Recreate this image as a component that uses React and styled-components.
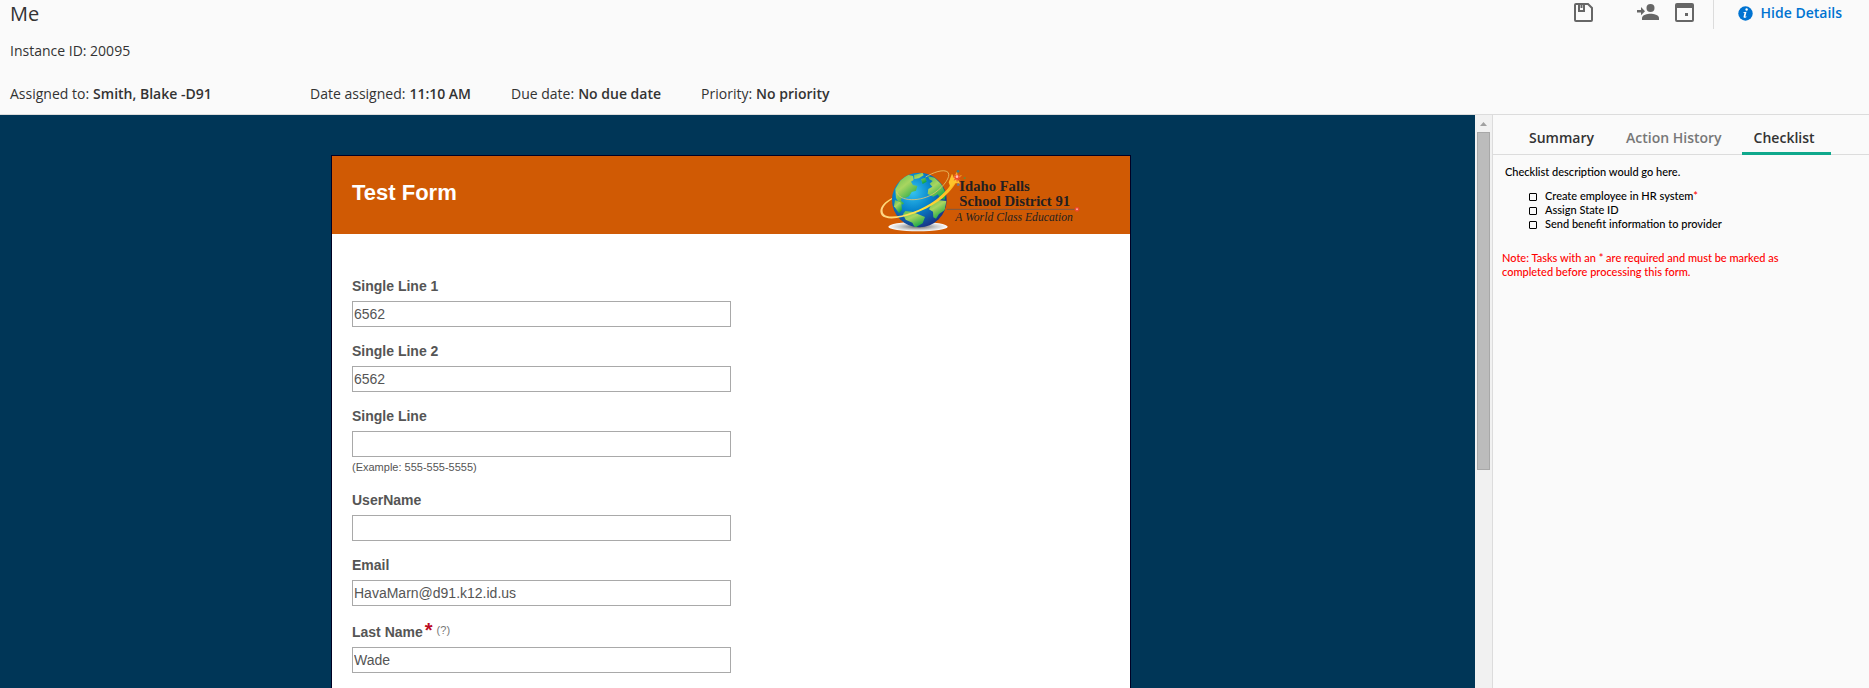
import React from "react";
import styled, { createGlobalStyle } from "styled-components";

const GlobalStyle = createGlobalStyle`
  *, *::before, *::after { box-sizing: border-box; }
  body { margin: 0; background: #fafafa; }
`;

const uiFont = `"Open Sans", "Noto Sans", sans-serif`;
const formFont = `"Liberation Sans", Arial, sans-serif`;

const Page = styled.div`
  display: flex;
  flex-direction: column;
  height: 100vh;
  overflow: hidden;
  font-family: ${uiFont};
  font-size: 14px;
  line-height: 20px;
  color: #333;
`;

const Header = styled.header`
  display: flex;
  justify-content: space-between;
  align-items: flex-start;
  flex: none;
  border-bottom: 1px solid #dcdcdc;
`;

const HeaderInfo = styled.div`
  padding: 0 10px 10px;
`;

const Title = styled.h1`
  margin: 0;
  font-size: 20px;
  line-height: 28px;
  font-weight: 400;
`;

const InstanceId = styled.p`
  margin: 13px 0 23px;
`;

const Facts = styled.dl`
  display: flex;
  gap: 40px;
  margin: 0;
`;

const Fact = styled.div`
  display: flex;
  gap: 4px;
  min-width: ${(p) => (p.$wide ? "260px" : "0")};
  white-space: nowrap;

  dd {
    margin: 0;
    font-weight: 600;
  }
`;

const Actions = styled.div`
  display: flex;
  align-items: center;
  height: 29px;
  padding-right: 27px;
`;

const IconButton = styled.button`
  display: flex;
  padding: 0;
  margin: 0 ${(p) => p.$gap}px 4px 0;
  border: 0;
  background: none;
  color: #666;
  cursor: pointer;
`;

const DetailsButton = styled.button`
  display: flex;
  align-items: flex-start;
  gap: 8px;
  height: 29px;
  padding: 3px 0 0 24px;
  border: 0;
  border-left: 1px solid #dcdcdc;
  background: none;
  font: 600 14px/20px ${uiFont};
  color: #0073d1;
  cursor: pointer;

  svg { margin-top: 3px; }
`;

const Body = styled.div`
  display: flex;
  flex: 1;
  min-height: 0;
`;

const FormPane = styled.main`
  flex: 1;
  min-width: 0;
  overflow-y: auto;
  scrollbar-width: none;
  padding: 40px 13px 0 0;
  background: #003657;
`;

const FormCard = styled.form`
  width: 800px;
  max-width: 100%;
  margin: 0 auto;
  border: 1px solid #000024;
  background: #fff;
  font-family: ${formFont};
  color: #555;
`;

const FormHeader = styled.div`
  display: flex;
  justify-content: space-between;
  height: 78px;
  padding: 12px 49px 0 20px;
  background: #d05a04;
`;

const FormTitle = styled.h2`
  margin: 12px 0 0;
  font-size: 22px;
  line-height: 26px;
  color: #fff;
`;

const Fields = styled.div`
  display: flex;
  flex-direction: column;
  gap: 15px;
  padding: 43px 20px 40px;
`;

const FieldBox = styled.div`
  display: flex;
  flex-direction: column;
  align-items: flex-start;
`;

const LabelRow = styled.div`
  display: flex;
  align-items: flex-end;
  height: ${(p) => (p.$required ? 26 : 24)}px;
  padding-bottom: 6px;
  font-size: 14px;
  line-height: 18px;

  label { font-weight: 700; }
`;

const Star = styled.span`
  margin: 0 4px 0 2px;
  align-self: flex-start;
  font-size: 20px;
  line-height: 18px;
  font-weight: 700;
  color: #bc0b23;
`;

const HelpButton = styled.button`
  align-self: flex-start;
  padding: 0;
  border: 0;
  background: none;
  font: 11px/18px ${formFont};
  color: #777;
`;

const TextBox = styled.input`
  width: 379px;
  max-width: 100%;
  height: 26px;
  padding: 0 1px;
  border: 1px solid #a9a9a9;
  border-radius: 0;
  background: #fff;
  font: 14px ${formFont};
  color: #555;
`;

const Hint = styled.small`
  height: 19px;
  padding-top: 3px;
  font-size: 11px;
  line-height: 14px;
`;

const ScrollBar = styled.div`
  display: flex;
  flex-direction: column;
  flex: none;
  width: 17px;
  background: #f1f1f1;
`;

const ScrollUp = styled.button`
  display: flex;
  align-items: center;
  justify-content: center;
  flex: none;
  height: 17px;
  padding: 0;
  border: 0;
  background: none;
`;

const ScrollThumb = styled.div`
  flex: 0 0 59%;
  margin: 0 2px;
  border: 1px solid #a8a8a8;
  background: #bcbcbc;
`;

const SidePanel = styled.aside`
  flex: none;
  width: 377px;
  border-left: 1px solid #dcdcdc;
  background: #fafafa;
`;

const Tabs = styled.div`
  display: flex;
  gap: 8px;
  height: 40px;
  padding: 8px 0 0 24px;
  border-bottom: 1px solid #dcdcdc;
`;

const Tab = styled.button`
  height: 32px;
  min-width: 89px;
  padding: 0 12px;
  border: 0;
  border-bottom: 3px solid ${(p) => (p.$active ? "#0fa88c" : "transparent")};
  background: none;
  font: 600 14px/20px ${uiFont};
  text-align: left;
  color: ${(p) => (p.$dim ? "#777" : "#333")};
  cursor: pointer;
`;

const Checklist = styled.section`
  padding: 10px 12px 0 9px;
  font-family: Lato, "Open Sans", sans-serif;
  font-size: 11px;
  line-height: 14px;
  font-weight: 500;
  color: #000;
`;

const Description = styled.p`
  margin: 0 0 10px 3px;
`;

const Tasks = styled.ul`
  margin: 0;
  padding: 0 0 0 27px;
  list-style: none;
`;

const Task = styled.li`
  display: flex;
  align-items: center;
  gap: 8px;
`;

const Tick = styled.input`
  appearance: none;
  width: 8px;
  height: 8px;
  margin: 2px 0 0;
  border: 1px solid #000;
  border-radius: 1px;

  &:checked { background: #000; }
`;

const Required = styled.span`
  color: #f00;
`;

const Note = styled.p`
  max-width: 300px;
  margin: 20px 0 0;
  color: #f00;
`;

const SaveIcon = () => (
  <svg width="20" height="20" viewBox="0 0 20 20" fill="none" stroke="currentColor" strokeWidth="2" aria-hidden="true">
    <path d="M2 1h12l4 4v12a1 1 0 0 1-1 1H2a1 1 0 0 1-1-1V2a1 1 0 0 1 1-1z" />
    <path d="M5 1v7h5V1M7.500 1v4" />
  </svg>
);

const AssignIcon = () => (
  <svg width="22" height="20" viewBox="0 0 22 20" fill="currentColor" aria-hidden="true">
    <circle cx="13.500" cy="5" r="4" />
    <path d="M5 17v-2c0-3 5.500-4.200 8.500-4.200S22 12 22 15v2z" />
    <path d="M0 7h4V4l4 4.300-4 4V9.500H0z" />
  </svg>
);

const CalendarIcon = () => (
  <svg width="20" height="20" viewBox="0 0 20 20" fill="currentColor" aria-hidden="true">
    <path fillRule="evenodd" d="M2 0h15a2 2 0 0 1 2 2v15a2 2 0 0 1-2 2H2a2 2 0 0 1-2-2V2a2 2 0 0 1 2-2zM2 5v12h15V5z" />
    <path d="M10 10h3v3h-3z" />
  </svg>
);

const InfoIcon = () => (
  <svg width="15" height="15" viewBox="0 0 15 15" aria-hidden="true">
    <circle cx="7.500" cy="7.500" r="7.200" fill="#0073d1" />
    <circle cx="8.600" cy="3.500" r="1.200" fill="#fff" />
    <path d="M5.500 6.200l3-.5-1.200 5 1.200-.4-.2.900c-1.600 1-3 .9-2.700-.6l.9-3.600-1.100-.1z" fill="#fff" />
  </svg>
);

const UpArrow = () => (
  <svg width="7" height="4" viewBox="0 0 7 4" aria-hidden="true">
    <path d="M3.500 0L7 4H0z" fill="#a0a0a0" />
  </svg>
);

const DistrictLogo = () => (
  <svg width="202" height="65" viewBox="55 55 606 195" role="img" aria-label="Idaho Falls School District 91">
    <defs>
      <radialGradient id="ocean" cx=".38" cy=".35" r=".75">
        <stop offset="0" stopColor="#35c4ee" />
        <stop offset=".45" stopColor="#0784cc" />
        <stop offset="1" stopColor="#1b2478" />
      </radialGradient>
      <linearGradient id="land" x1="0" y1="0" x2=".6" y2="1">
        <stop offset="0" stopColor="#5bbd50" />
        <stop offset=".45" stopColor="#a9d560" />
        <stop offset="1" stopColor="#16a747" />
      </linearGradient>
      <linearGradient id="comet" x1="60" y1="200" x2="290" y2="80" gradientUnits="userSpaceOnUse">
        <stop offset="0" stopColor="#ffd58a" />
        <stop offset=".45" stopColor="#ffe23e" />
        <stop offset="1" stopColor="#ffab18" />
      </linearGradient>
      <radialGradient id="base">
        <stop offset="0" stopColor="#666" />
        <stop offset=".6" stopColor="#c9c9c9" />
        <stop offset="1" stopColor="#fff" />
      </radialGradient>
      <clipPath id="sphere"><circle cx="176" cy="151" r="82" /></clipPath>
    </defs>
    <ellipse cx="172" cy="231" rx="89" ry="14" fill="url(#base)" />
    <circle cx="176" cy="151" r="82" fill="url(#ocean)" />
    <g clipPath="url(#sphere)" fill="url(#land)">
      <path d="M104 118l16-27 21-16 16 4 2 12-8 5 6 10 13 3-4 14-13 4-8 13-12 5-9-3-3 11 9 8-4 4-12-7-8-13z" />
      <path d="M160 76l26-7 3 8-14 9-14 2zM181 89l13-5 4 12-12 7z" />
      <path d="M202 80l20 4 20 20 14 28-4 18-15-4-5-12-14 7-17-8 2-15 12-7-8-9 9-8-10-5z" />
      <path d="M212 164l16-13 29 3-5 28-17 11-9 14-8-4-1-17-12-7z" />
      <path d="M134 184l20 2 39 16-7 19-23 13-8-15-20-9-8-16z" />
      <path d="M103 151l19 8 2 21-9 10-15-20z" />
    </g>
    <path d="M108 126c6 30 72 33 115 3 26-19 49-48 39-61-12-12-46 1-67 14" fill="none" stroke="#e9c66b" strokeWidth="3" opacity=".8" />
    <path d="M94 145C65 159 52 182 63 197c20 24 112-1 170-42 24-18 41-36 55-59l-10-4c-13 24-29 41-52 58-57 42-139 63-157 43-9-12 1-29 25-44z" fill="url(#comet)" />
    <path d="M264 98l10-26 5 11 10-17 2 14 13-3-13 12 8 13-16-2-13 15z" fill="#ffc42b" />
    <path d="M288 69l2 8 8-5-4 8 10 1-9 4 6 8-9-4-3 10-2-10-8 4 4-8-8-3 9-2-4-8 8 5z" fill="#f04b32" />
    <circle cx="289" cy="81" r="4" fill="#ffc4b0" />
    <circle cx="292" cy="65" r="4" fill="#477c85" />
    <circle cx="312" cy="85" r="3" fill="#6d8b35" />
    <circle cx="293" cy="105" r="4" fill="#75768a" />
    <path d="M258 179h387" stroke="#7b5948" strokeWidth="3" />
    <circle cx="649" cy="179" r="7" fill="#ef4630" />
    <circle cx="649" cy="179" r="3" fill="#ffad98" />
    <g fill="#231f20" fontFamily="'Liberation Serif', 'Times New Roman', serif">
      <text x="296" y="125" fontSize="44" fontWeight="700">Idaho Falls</text>
      <text x="296" y="168" fontSize="44" fontWeight="700">School District 91</text>
      <text x="284" y="214" fontSize="35" fontStyle="italic">A World Class Education</text>
    </g>
  </svg>
);

const facts = [
  { label: "Assigned to:", value: "Smith, Blake -D91", wide: true },
  { label: "Date assigned:", value: "11:10 AM" },
  { label: "Due date:", value: "No due date" },
  { label: "Priority:", value: "No priority" },
];

const fields = [
  { id: "single-line-1", label: "Single Line 1", value: "6562" },
  { id: "single-line-2", label: "Single Line 2", value: "6562" },
  { id: "single-line", label: "Single Line", value: "", hint: "(Example: 555-555-5555)" },
  { id: "username", label: "UserName", value: "" },
  { id: "email", label: "Email", value: "HavaMarn@d91.k12.id.us" },
  { id: "last-name", label: "Last Name", value: "Wade", required: true },
];

const tasks = [
  { id: "task-hr", text: "Create employee in HR system", required: true },
  { id: "task-state", text: "Assign State ID" },
  { id: "task-benefit", text: "Send benefit information to provider" },
];

function Field({ id, label, value, hint, required }) {
  return (
    <FieldBox>
      <LabelRow $required={required}>
        <label htmlFor={id}>{label}</label>
        {required && <Star>*</Star>}
        {required && <HelpButton type="button">(?)</HelpButton>}
      </LabelRow>
      <TextBox id={id} type="text" defaultValue={value} />
      {hint && <Hint>{hint}</Hint>}
    </FieldBox>
  );
}

export default function App() {
  return (
    <Page>
      <GlobalStyle />
      <Header>
        <HeaderInfo>
          <Title>Me</Title>
          <InstanceId>Instance ID: 20095</InstanceId>
          <Facts>
            {facts.map((f) => (
              <Fact key={f.label} $wide={f.wide}>
                <dt>{f.label}</dt>
                <dd>{f.value}</dd>
              </Fact>
            ))}
          </Facts>
        </HeaderInfo>
        <Actions>
          <IconButton $gap={43} aria-label="Save"><SaveIcon /></IconButton>
          <IconButton $gap={16} aria-label="Assign"><AssignIcon /></IconButton>
          <IconButton $gap={18} aria-label="Due date"><CalendarIcon /></IconButton>
          <DetailsButton><InfoIcon />Hide Details</DetailsButton>
        </Actions>
      </Header>
      <Body>
        <FormPane>
          <FormCard>
            <FormHeader>
              <FormTitle>Test Form</FormTitle>
              <DistrictLogo />
            </FormHeader>
            <Fields>
              {fields.map((f) => <Field key={f.id} {...f} />)}
            </Fields>
          </FormCard>
        </FormPane>
        <ScrollBar>
          <ScrollUp aria-label="Scroll up"><UpArrow /></ScrollUp>
          <ScrollThumb />
        </ScrollBar>
        <SidePanel>
          <Tabs role="tablist">
            <Tab role="tab">Summary</Tab>
            <Tab role="tab" $dim>Action History</Tab>
            <Tab role="tab" $active aria-selected="true">Checklist</Tab>
          </Tabs>
          <Checklist>
            <Description>Checklist description would go here.</Description>
            <Tasks>
              {tasks.map((t) => (
                <Task key={t.id}>
                  <Tick type="checkbox" id={t.id} />
                  <label htmlFor={t.id}>{t.text}{t.required && <Required>*</Required>}</label>
                </Task>
              ))}
            </Tasks>
            <Note>Note: Tasks with an * are required and must be marked as completed before processing this form.</Note>
          </Checklist>
        </SidePanel>
      </Body>
    </Page>
  );
}
